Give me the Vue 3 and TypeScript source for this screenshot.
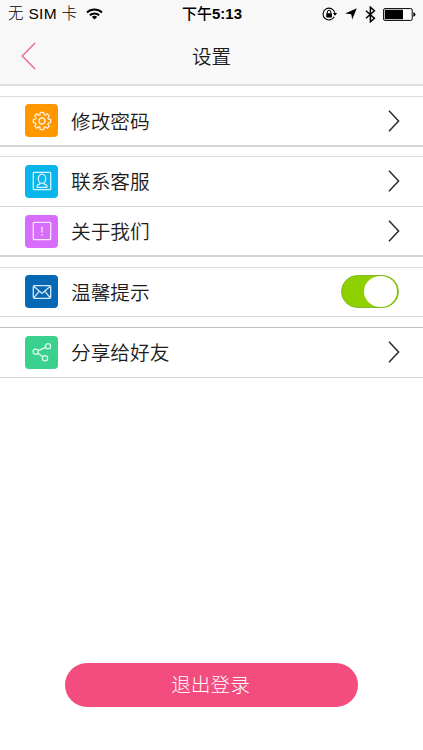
<script setup lang="ts">
import { ref } from 'vue'

type IconName = 'gear' | 'contact' | 'about' | 'mail' | 'share'
interface Item {
  label: string
  icon: IconName
  toggle?: boolean
}
interface Group {
  id: string
  items: Item[]
}

const groups: Group[] = [
  { id: 'password', items: [{ label: '修改密码', icon: 'gear' }] },
  {
    id: 'service',
    items: [
      { label: '联系客服', icon: 'contact' },
      { label: '关于我们', icon: 'about' },
    ],
  },
  { id: 'notice', items: [{ label: '温馨提示', icon: 'mail', toggle: true }] },
  { id: 'share', items: [{ label: '分享给好友', icon: 'share' }] },
]

const noticeOn = ref(true)
</script>

<template>
  <div class="screen">
    <header class="top">
      <div class="status">
        <div class="carrier">
          <span class="operator">无 SIM 卡</span>
          <svg class="wifi" width="17" height="12" viewBox="0 0 17 12" fill="none" stroke="#000" stroke-width="2">
            <path d="M1 4.5a10.8 10.8 0 0 1 15 0" />
            <path d="M3.8 7.3a6.8 6.8 0 0 1 9.400 0" />
            <path d="M8.500 11.600L5.800 9a4 4 0 0 1 5.400 0z" fill="#000" stroke="none" />
          </svg>
        </div>
        <div class="time"><span class="noon">下午</span>5:13</div>
        <div class="indicators">
          <svg width="16" height="14" viewBox="0 0 16 14">
            <path d="M12.200 9.800A5.900 5.900 0 1 1 12.800 6" fill="none" stroke="#000" stroke-width="1.100" />
            <path d="M10.800 6h4.400L13 8.800z" />
            <rect x="4.300" y="6.200" width="5.600" height="4.200" rx=".4" />
            <path d="M5.400 6.500V5a1.700 1.700 0 0 1 3.400 0v1.500" fill="none" stroke="#000" />
          </svg>
          <svg width="12" height="12" viewBox="0 0 12 12">
            <path d="M11.800.2L7.200 11.600 6.300 6.200.2 5.400z" />
          </svg>
          <svg width="11" height="17" viewBox="0 0 11 17">
            <path d="M1 4.700l8.400 7.500-4 3.600V1.200l4 3.600L1 12.200" fill="none" stroke="#000" stroke-width="1.500" />
          </svg>
          <svg width="33" height="13" viewBox="0 0 33 13">
            <rect x=".6" y=".6" width="28.600" height="11.800" rx="1.400" fill="#fff" stroke="#000" stroke-width="1" />
            <rect x="1.800" y="1.800" width="18.200" height="9.400" />
            <path d="M30.400 4.200q2 .4 2 2.300t-2 2.300z" />
          </svg>
        </div>
      </div>
      <nav class="nav">
        <button class="back" aria-label="返回">
          <svg width="15" height="28" viewBox="0 0 15 28" fill="none" stroke="#ec5f8d" stroke-width="1.300">
            <path d="M14 1L1.200 14 14 27" />
          </svg>
        </button>
        <h1>设置</h1>
      </nav>
    </header>

    <main>
      <section v-for="group in groups" :key="group.id" class="group" :class="group.id">
        <div v-for="item in group.items" :key="item.icon" class="row">
          <span class="tile" :class="item.icon">
            <svg width="20" height="20" viewBox="0 0 20 20" fill="none" stroke="#fff" stroke-width="1.300" stroke-opacity=".85">
              <template v-if="item.icon === 'gear'">
                <path
                  stroke-linejoin="round"
                  d="M8.300 1.400h3.400l.3 2.200 1.400.6 1.800-1.400 2.100 2.100-1.400 1.800.6 1.400 2.200.3v3.200l-2.200.3-.6 1.400 1.400 1.800-2.100 2.100-1.800-1.400-1.400.6-.3 2.200H8.300L8 16.400l-1.400-.6-1.800 1.400-2.100-2.100 1.400-1.800-.6-1.400-2.200-.3V8.400l2.200-.3.6-1.400-1.400-1.800 2.100-2.100 1.800 1.400L8 3.600z"
                />
                <circle cx="10" cy="10" r="3" />
              </template>
              <template v-else-if="item.icon === 'contact'">
                <rect x="1.300" y="1.300" width="17.400" height="17.400" rx="1" />
                <ellipse cx="10" cy="7.700" rx="3.700" ry="4.600" />
                <path d="M7.800 11.600v1.400L5.800 13.800q-1 .7-.6 2.500h9.600q.4-1.800-.6-2.500l-2-.8v-1.400" />
              </template>
              <template v-else-if="item.icon === 'about'">
                <rect x="1.300" y="1.300" width="17.400" height="17.400" rx="1" />
                <path d="M10 5.800v5.700M10 13v1.400" />
              </template>
              <template v-else-if="item.icon === 'mail'">
                <rect x="1.300" y="3.700" width="17.400" height="12.600" rx="1" />
                <path d="M2 4.500l8 7 8-7M2 15.700l5.300-6.500M18 15.700l-5.300-6.500" />
              </template>
              <template v-else>
                <circle cx="3.700" cy="9.700" r="2.600" />
                <circle cx="16" cy="4.300" r="2.600" />
                <circle cx="13" cy="16.300" r="2.600" />
                <path d="M6.200 8.600l7.400-3.200M5.900 11.300l4.900 3.500" />
              </template>
            </svg>
          </span>
          <span class="label">{{ item.label }}</span>
          <button
            v-if="item.toggle"
            class="switch"
            :class="{ on: noticeOn }"
            role="switch"
            :aria-checked="noticeOn"
            @click="noticeOn = !noticeOn"
          >
            <span class="knob"></span>
          </button>
          <svg v-else class="chevron" width="12" height="22" viewBox="0 0 12 22" fill="none" stroke="#2b2b2b" stroke-width="1.500">
            <path d="M1 .8L10.600 11 1 21.200" />
          </svg>
        </div>
      </section>
    </main>

    <footer>
      <button class="logout">退出登录</button>
    </footer>
  </div>
</template>

<style>
body {
  margin: 0;
  background: #fff;
}
</style>

<style scoped>
.screen {
  width: 100%;
  height: 750px;
  display: flex;
  flex-direction: column;
  overflow: hidden;
  background: #fff;
  color: #1c1c1c;
  font-family: "Liberation Sans", "Noto Sans CJK SC", sans-serif;
}
button {
  border: 0;
  padding: 0;
  background: none;
  font-family: inherit;
}
svg {
  display: block;
  flex: none;
}
.top {
  flex: none;
  box-sizing: border-box;
  height: 86px;
  background: #f8f8f8;
  border-bottom: 2px solid #dedede;
}
.status {
  height: 28px;
  padding: 0 7px 0 8px;
  display: grid;
  grid-template-columns: 1fr auto 1fr;
  align-items: center;
  color: #000;
  font-size: 15px;
  line-height: 28px;
}
.carrier {
  display: flex;
  align-items: center;
  gap: 9px;
}
.operator {
  font-size: 15.500px;
  font-weight: 300;
  letter-spacing: .3px;
  white-space: nowrap;
}
.carrier,
.indicators {
  min-width: 0;
}
.time {
  font-weight: 700;
}
.noon {
  font-weight: 500;
}
.indicators {
  display: flex;
  justify-content: flex-end;
  align-items: center;
  gap: 7.500px;
}
.nav {
  height: 57px;
  display: grid;
  grid-template-columns: 60px 1fr 60px;
  align-items: center;
}
.back {
  height: 28px;
  margin-top: -2px;
  padding-left: 21px;
}
h1 {
  margin: 0;
  text-align: center;
  font-size: 19.500px;
  font-weight: 350;
  line-height: 28px;
}
main {
  flex: 1;
  padding-top: 10px;
}
.group {
  box-sizing: border-box;
  display: flex;
  flex-direction: column;
  border-top: 1px solid #ddd;
  border-bottom: 1px solid #d6d6d9;
}
.password {
  height: 51px;
  margin-bottom: 9px;
  border-bottom: 2px solid #d4d4d4;
}
.service {
  height: 101px;
  margin-bottom: 10px;
  border-bottom: 2px solid #d4d4d7;
}
.notice {
  height: 50px;
  margin-bottom: 10px;
}
.share.group {
  height: 51px;
  border-top-color: #c0c0c0;
}
.row {
  flex: 1;
  display: flex;
  align-items: center;
  padding: 0 23px 1px 25px;
}
.row + .row {
  padding-bottom: 0;
  border-top: 1px solid #d4d4d8;
}
.tile {
  flex: none;
  width: 33px;
  height: 33px;
  display: flex;
  align-items: center;
  justify-content: center;
  border-radius: 4px;
}
.tile.gear { background: #ff9800; }
.tile.contact { background: #08b6ec; }
.tile.about { background: #d86cfb; }
.tile.mail { background: #0568b5; }
.tile.share { background: #3ad18e; }
.label {
  flex: 1;
  padding-top: 2px;
  margin-left: 13px;
  font-size: 19.700px;
  font-weight: 350;
  line-height: 28px;
}
.switch {
  box-sizing: border-box;
  width: 58px;
  height: 33px;
  margin-right: 1px;
  padding: 0 1px;
  display: flex;
  align-items: center;
  border: 1px solid #bbb;
  border-radius: 17px;
  background: #ccc;
}
.switch.on {
  justify-content: flex-end;
  border-color: #83b62c;
  background: #8fd000;
}
.knob {
  width: 33px;
  height: 31px;
  border-radius: 50%;
  background: #fff;
}
footer {
  flex: none;
  padding: 0 65px 43px;
}
.logout {
  display: block;
  width: 100%;
  height: 44px;
  padding-right: 2px;
  border-radius: 22px;
  background: #f34c7e;
  color: #fff;
  font-size: 19.700px;
  font-weight: 300;
  line-height: 45px;
}
</style>
